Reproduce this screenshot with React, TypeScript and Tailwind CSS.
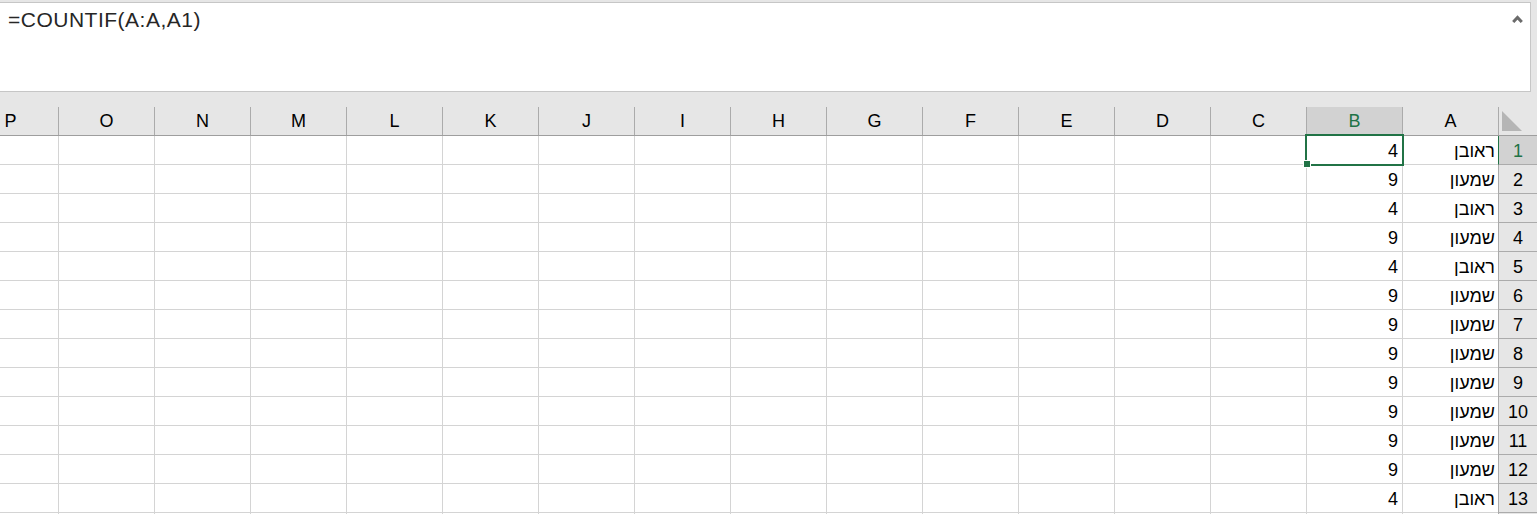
// Excel-style RTL sheet: formula bar + grid with COUNTIF result in column B

const COLS = ['A', 'B', 'C', 'D', 'E', 'F', 'G', 'H', 'I', 'J', 'K', 'L', 'M', 'N', 'O', 'P'];

const REUVEN = 'ראובן';
const SHIMON = 'שמעון';

const DATA: [string, string][] = [
  [REUVEN, '4'],
  [SHIMON, '9'],
  [REUVEN, '4'],
  [SHIMON, '9'],
  [REUVEN, '4'],
  [SHIMON, '9'],
  [SHIMON, '9'],
  [SHIMON, '9'],
  [SHIMON, '9'],
  [SHIMON, '9'],
  [SHIMON, '9'],
  [SHIMON, '9'],
  [REUVEN, '4'],
];

function FormulaBar() {
  return (
    <div className="flex h-[90px] w-[1531px] justify-between border border-l-0 border-[#c6c6c6] bg-white">
      <div className="pl-[8px] pt-[5px] text-[21px] leading-[24px] tracking-[0.5px] text-[#262626]">
        =COUNTIF(A:A,A1)
      </div>
      <svg className="mr-[7px] mt-[12px]" width="11" height="8" viewBox="0 0 11 8">
        <polyline points="1.2,7 5.5,2.4 9.8,7" fill="none" stroke="#6b6b6b" strokeWidth="3" />
      </svg>
    </div>
  );
}

function ColumnHeaders() {
  return (
    <div className="flex h-[44px] flex-row-reverse items-end border-b border-[#9e9e9e]">
      {/* coin de sélection */}
      <div className="h-[28px] w-[39px] shrink-0 border-l border-[#ababab] pl-[3px] pt-[4px]">
        <svg width="20" height="20" viewBox="0 0 20 20">
          <polygon points="0,0 0,20 20,20" fill="#b5b5b5" />
        </svg>
      </div>
      {COLS.map((c) => (
        <div
          key={c}
          className={`flex h-[28px] w-[96px] shrink-0 items-center justify-center border-l border-[#ababab] text-[18px] ${
            c === 'B' ? 'bg-[#d2d2d2] text-[#217346]' : 'text-black'
          }`}
        >
          {c}
        </div>
      ))}
    </div>
  );
}

function Row({ index }: { index: number }) {
  const d = DATA[index];
  const selected = index === 0;
  return (
    <div className="flex h-[29px] flex-row-reverse">
      <div
        className={`flex w-[39px] shrink-0 items-end justify-center border-b border-l pb-[3px] text-[18px] leading-[20px] ${
          selected
            ? 'border-b-[#ababab] border-l-[#217346] bg-[#d2d2d2] text-[#217346]'
            : 'border-[#ababab] bg-[#e6e6e6] text-black'
        }`}
      >
        {d ? index + 1 : null}
      </div>
      {COLS.map((c) => (
        <div
          key={c}
          className="flex w-[96px] shrink-0 items-end justify-end border-b border-l border-[#d4d4d4] bg-white pb-[3px] pr-[3px] text-[18px] leading-[20px] text-black"
        >
          {d && c === 'A' ? d[0] : null}
          {d && c === 'B' ? <span className="pr-[1px]">{d[1]}</span> : null}
        </div>
      ))}
    </div>
  );
}

export default function App() {
  return (
    <div className="relative h-[514px] w-[1537px] overflow-hidden bg-[#e6e6e6] pt-[2px] font-['Liberation_Sans',Arial,sans-serif]">
      <FormulaBar />
      <ColumnHeaders />
      {Array.from({ length: 14 }).map((_, i) => (
        <Row key={i} index={i} />
      ))}

      {/* Cellule active B1 */}
      <div className="absolute left-[1305px] top-[134px] h-[32px] w-[99px] border-2 border-[#217346]" />
      <div className="absolute left-[1303px] top-[160px] h-[8px] w-[8px] border border-white bg-[#217346]" />
    </div>
  );
}
